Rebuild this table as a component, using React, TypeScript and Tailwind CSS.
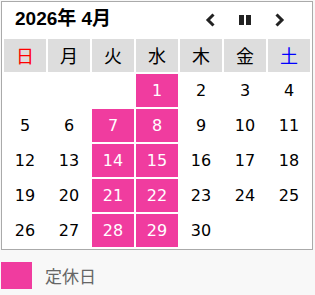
const weekdays = [
  { label: "日", color: "text-[#ff0000]" },
  { label: "月", color: "text-black" },
  { label: "火", color: "text-black" },
  { label: "水", color: "text-black" },
  { label: "木", color: "text-black" },
  { label: "金", color: "text-black" },
  { label: "土", color: "text-[#0000ff]" },
];

// April 2026 starts on Wednesday
const weeks: (number | null)[][] = [
  [null, null, null, 1, 2, 3, 4],
  [5, 6, 7, 8, 9, 10, 11],
  [12, 13, 14, 15, 16, 17, 18],
  [19, 20, 21, 22, 23, 24, 25],
  [26, 27, 28, 29, 30, null, null],
];

const closed = new Set([1, 7, 8, 14, 15, 21, 22, 28, 29]);

function Chevron({ dir }: { dir: "left" | "right" }) {
  return (
    <svg width="10" height="14" viewBox="0 0 10 14" className="block">
      <polyline
        points={dir === "left" ? "8.5,1.5 3,7 8.5,12.5" : "1.5,1.5 7,7 1.5,12.5"}
        fill="none"
        stroke="#222"
        strokeWidth="3"
      />
    </svg>
  );
}

export default function App() {
  return (
    <div className="min-h-screen bg-[#f8f8f8] pt-px pl-px font-['DejaVu_Sans','Noto_Sans_CJK_JP',sans-serif]">
      <div className="w-[312px] border border-[#aaa] bg-white">
        <div className="flex h-[35px] items-center justify-between pl-[13px] pr-[27px]">
          <h2 className="text-[19px] font-bold text-black font-['Liberation_Sans','Noto_Sans_CJK_JP',sans-serif]">
            2026年 4月
          </h2>
          <div className="flex items-center gap-[24px] pt-px">
            <button className="flex items-center">
              <Chevron dir="left" />
            </button>
            <button className="flex items-center gap-[2px]">
              <span className="block h-[10px] w-[5px] bg-[#222]" />
              <span className="block h-[10px] w-[5px] bg-[#222]" />
            </button>
            <button className="flex items-center">
              <Chevron dir="right" />
            </button>
          </div>
        </div>
        <table className="w-[310px] table-fixed border-separate border-spacing-[2px]">
          <thead>
            <tr>
              {weekdays.map((d) => (
                <th
                  key={d.label}
                  className={`h-[33px] w-[42px] bg-[#dddddd] p-0 text-[18px] font-normal font-['Noto_Sans_CJK_JP',sans-serif] ${d.color}`}
                >
                  {d.label}
                </th>
              ))}
            </tr>
          </thead>
          <tbody>
            {weeks.map((week, i) => (
              <tr key={i}>
                {week.map((day, j) => (
                  <td
                    key={j}
                    className={`h-[33px] p-0 text-center text-[16px] ${
                      day && closed.has(day) ? "bg-[#f03c9f] text-white" : "text-black"
                    }`}
                  >
                    {day ?? ""}
                  </td>
                ))}
              </tr>
            ))}
          </tbody>
        </table>
      </div>
      <div className="mt-[12px] flex items-center">
        <span className="block h-[27px] w-[31px] bg-[#f03c9f]" />
        <span className="ml-[13px] text-[17px] text-[#666] font-['Noto_Sans_CJK_JP',sans-serif]">定休日</span>
      </div>
    </div>
  );
}
